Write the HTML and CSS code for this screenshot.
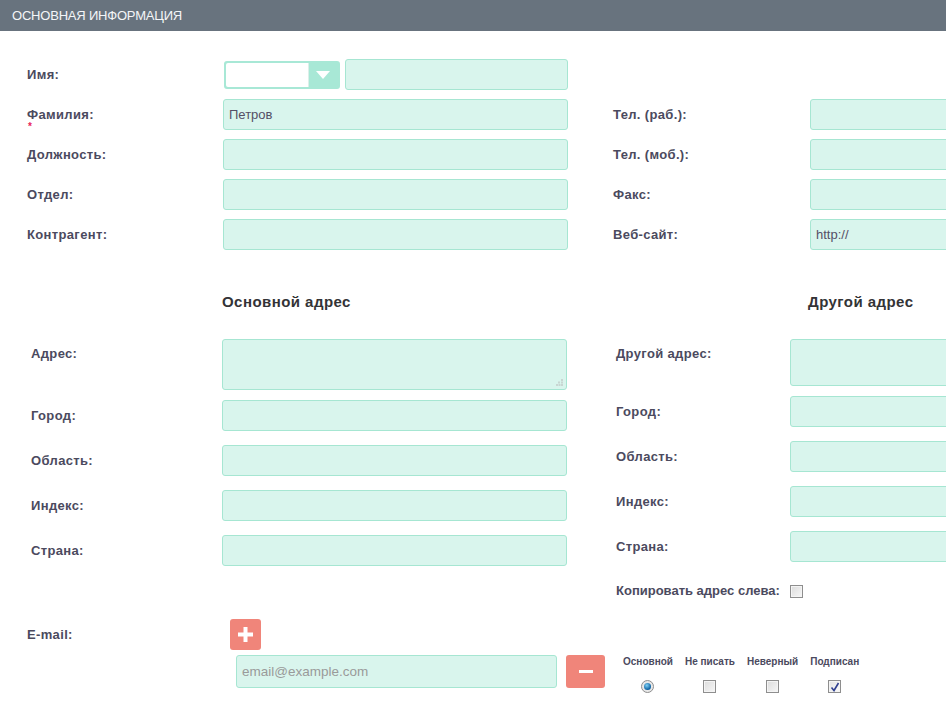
FILE: index.html
```html
<!DOCTYPE html>
<html lang="ru">
<head>
<meta charset="utf-8">
<title>Основная информация</title>
<link rel="stylesheet" href="styles.css">
</head>
<body>
<div class="header">ОСНОВНАЯ ИНФОРМАЦИЯ</div>

<div class="top">
  <div class="lbl">Имя:</div>
  <div class="name-field">
    <div class="select"><div class="select-val"></div><div class="select-btn"><svg width="14" height="8" viewBox="0 0 14 8"><path d="M0 0H14L7 8Z" fill="#fff"/></svg></div></div>
    <input class="inp name-inp" type="text">
  </div>
  <div></div><div></div>

  <div class="lbl req">Фамилия:<span class="star">*</span></div>
  <input class="inp" type="text" value="Петров">
  <div class="lbl">Тел. (раб.):</div>
  <input class="inp" type="text">

  <div class="lbl">Должность:</div>
  <input class="inp" type="text">
  <div class="lbl">Тел. (моб.):</div>
  <input class="inp" type="text">

  <div class="lbl">Отдел:</div>
  <input class="inp" type="text">
  <div class="lbl">Факс:</div>
  <input class="inp" type="text">

  <div class="lbl">Контрагент:</div>
  <input class="inp" type="text">
  <div class="lbl">Веб-сайт:</div>
  <input class="inp" type="text" value="http://">
</div>

<div class="addr">
  <div class="addr-col left">
    <div class="addr-title">Основной адрес</div>
    <div class="arow area-row">
      <div class="lbl top-lbl">Адрес:</div>
      <div class="area"><svg class="grip" width="7" height="7" viewBox="0 0 7 7"><rect x="5" y="0" width="2" height="2" fill="#c8d6d2"/><rect x="2" y="2.5" width="2" height="2" fill="#c8d6d2"/><rect x="5" y="2.5" width="2" height="2" fill="#c8d6d2"/><rect x="0" y="5" width="2" height="2" fill="#c8d6d2"/><rect x="2.5" y="5" width="2" height="2" fill="#c8d6d2"/><rect x="5" y="5" width="2" height="2" fill="#c8d6d2"/></svg></div>
    </div>
    <div class="arow"><div class="lbl">Город:</div><input class="inp" type="text"></div>
    <div class="arow"><div class="lbl">Область:</div><input class="inp" type="text"></div>
    <div class="arow"><div class="lbl">Индекс:</div><input class="inp" type="text"></div>
    <div class="arow"><div class="lbl">Страна:</div><input class="inp" type="text"></div>
  </div>
  <div class="addr-col right">
    <div class="addr-title">Другой адрес</div>
    <div class="arow area-row">
      <div class="lbl top-lbl">Другой адрес:</div>
      <div class="area"></div>
    </div>
    <div class="arow"><div class="lbl">Город:</div><input class="inp" type="text"></div>
    <div class="arow"><div class="lbl">Область:</div><input class="inp" type="text"></div>
    <div class="arow"><div class="lbl">Индекс:</div><input class="inp" type="text"></div>
    <div class="arow"><div class="lbl">Страна:</div><input class="inp" type="text"></div>
    <div class="copy-row"><span class="lbl copy-lbl">Копировать адрес слева:</span><span class="cb"></span></div>
  </div>
</div>

<div class="email">
  <div class="lbl">E-mail:</div>
  <div class="btn add"><svg width="15" height="15" viewBox="0 0 15 15"><rect x="5.5" y="0" width="4" height="15" fill="#fff"/><rect x="0" y="5.5" width="15" height="4" fill="#fff"/></svg></div>
  <div></div>
  <div class="email-row">
    <input class="inp email-inp" type="text" placeholder="email@example.com">
    <div class="btn del"><svg width="14" height="3" viewBox="0 0 14 3"><rect width="14" height="3" fill="#fff"/></svg></div>
    <div class="flags">
      <div class="flag"><span class="fh">Основной</span><span class="radio"><span class="dot"></span></span></div>
      <div class="flag"><span class="fh">Не писать</span><span class="cb"></span></div>
      <div class="flag"><span class="fh">Неверный</span><span class="cb"></span></div>
      <div class="flag"><span class="fh">Подписан</span><span class="cb checked"><svg width="10" height="10" viewBox="0 0 10 10"><path d="M1.5 5.5L4 8.5L8.5 1" fill="none" stroke="#2f3f8f" stroke-width="1.6"/></svg></span></div>
    </div>
  </div>
</div>
</body>
</html>
```
FILE: styles.css
```css
html, body {
  margin: 0;
  padding: 0;
  overflow: hidden;
  background: #fff;
}
body {
  font-family: "Liberation Sans", Arial, sans-serif;
  width: 946px;
  height: 706px;
}
.header {
  height: 31px;
  background: #68737e;
  color: #f4f6f8;
  font-size: 13px;
  line-height: 31px;
  padding-left: 12px;
  letter-spacing: -0.2px;
}
.lbl {
  font-size: 13px;
  font-weight: bold;
  color: #4b4a5e;
  line-height: 16px;
  letter-spacing: 0.35px;
  white-space: nowrap;
}
.copy-lbl { letter-spacing: 0; }
.inp {
  box-sizing: border-box;
  height: 31px;
  margin: 0;
  border: 1px solid #a6e6d2;
  border-radius: 3px;
  background: #d9f5ed;
  padding: 0 5px;
  font-family: "Liberation Sans", Arial, sans-serif;
  font-size: 13px;
  color: #554f66;
  outline: none;
}
.top {
  display: grid;
  grid-template-columns: 196px 345px 197px 200px;
  column-gap: 0;
  grid-auto-rows: 31px;
  row-gap: 9px;
  padding: 28px 0 0 27px;
  align-items: center;
  width: 1100px;
}
.top > .inp { height: 31px; }
.top > .lbl:nth-child(4n+3) { margin-left: 45px; }
.top > .inp:nth-child(4n) { margin-left: 45px; }
.req { position: relative; }
.star {
  position: absolute;
  left: 1px;
  top: 12px;
  color: #e8245a;
  font-size: 10px;
  font-weight: bold;
  letter-spacing: 0;
}
.name-field {
  display: flex;
  align-items: center;
  gap: 5px;
  height: 31px;
}
.select {
  box-sizing: border-box;
  margin-left: 1px;
  width: 116px;
  height: 28px;
  border: 2px solid #a8e8d6;
  border-radius: 3px;
  background: #a8e8d6;
  display: flex;
}
.select-val {
  width: 82px;
  background: #fff;
  border-right: 1px solid #dcefe9;
  border-radius: 2px 0 0 2px;
}
.select-btn {
  flex: 1;
  display: flex;
  align-items: center;
  justify-content: center;
}
.name-inp {
  width: 224px;
  height: 31px;
  margin-top: -1px;
}
.addr {
  display: flex;
  margin-top: 43px;
  width: 1100px;
}
.addr-col {
  display: flex;
  flex-direction: column;
}
.addr-col.left { padding-left: 31px; width: 536px; }
.addr-col.right { margin-left: 49px; }
.addr-title {
  font-size: 15px;
  font-weight: bold;
  color: #333336;
  line-height: 18px;
  letter-spacing: 0.45px;
  margin-bottom: 28px;
}
.left .addr-title { margin-left: 191px; }
.right .addr-title { margin-left: 192px; }
.arow {
  display: flex;
  align-items: center;
  margin-top: 14px;
}
.arow.area-row { margin-top: 0; align-items: flex-start; margin-bottom: -4px; }
.left .arow.area-row { margin-bottom: -4px; }
.left .arow .lbl { width: 191px; }
.right .arow .lbl { width: 174px; }
.left .inp { width: 345px; }
.right .inp { width: 200px; }
.top-lbl { padding-top: 7px; }
.area {
  position: relative;
  box-sizing: border-box;
  border: 1px solid #a6e6d2;
  border-radius: 3px;
  background: #d9f5ed;
}
.left .area { width: 346px; height: 51px; }
.right .area { width: 200px; height: 47px; }
.grip { position: absolute; right: 3px; bottom: 3px; }
.copy-row {
  display: flex;
  align-items: center;
  gap: 10px;
  margin-top: 22px;
  height: 14px;
}
.cb {
  box-sizing: border-box;
  width: 13px;
  height: 13px;
  border: 1px solid #8e8e8e;
  background: linear-gradient(135deg, #dcdcdc, #f6f6f6);
  box-shadow: inset 0 0 0 1px #f4f4f4;
  display: inline-flex;
  align-items: center;
  justify-content: center;
}
.cb.checked { background: linear-gradient(135deg, #e2e2e2, #fafafa); }
.email {
  display: grid;
  grid-template-columns: 203px auto;
  row-gap: 5px;
  padding-left: 27px;
  margin-top: 21px;
  align-items: center;
}
.btn {
  box-sizing: border-box;
  height: 31px;
  background: #f0857a;
  border-radius: 3px;
  display: flex;
  align-items: center;
  justify-content: center;
}
.btn.add { width: 31px; }
.btn.del { width: 39px; height: 33px; margin-left: 9px; }
.email-row {
  display: flex;
  align-items: flex-start;
  margin-left: 6px;
}
.email-inp {
  width: 321px;
  height: 33px;
  font-size: 13.5px;
}
.email-inp::placeholder { color: #9a9a9a; }
.flags {
  display: flex;
  gap: 12px;
  margin-left: 18px;
  margin-top: 1px;
}
.flag {
  display: flex;
  flex-direction: column;
  align-items: center;
  gap: 12px;
}
.fh {
  font-size: 10px;
  font-weight: bold;
  color: #4b4a5e;
  line-height: 12px;
  white-space: nowrap;
}
.radio {
  box-sizing: border-box;
  width: 13px;
  height: 13px;
  border-radius: 50%;
  border: 1px solid #8e8e8e;
  background: #e8e8e8;
  display: flex;
  align-items: center;
  justify-content: center;
}
.dot {
  width: 7px;
  height: 7px;
  border-radius: 50%;
  background: radial-gradient(circle at 40% 35%, #7fd0f5, #0a5fa0 70%);
}
```
